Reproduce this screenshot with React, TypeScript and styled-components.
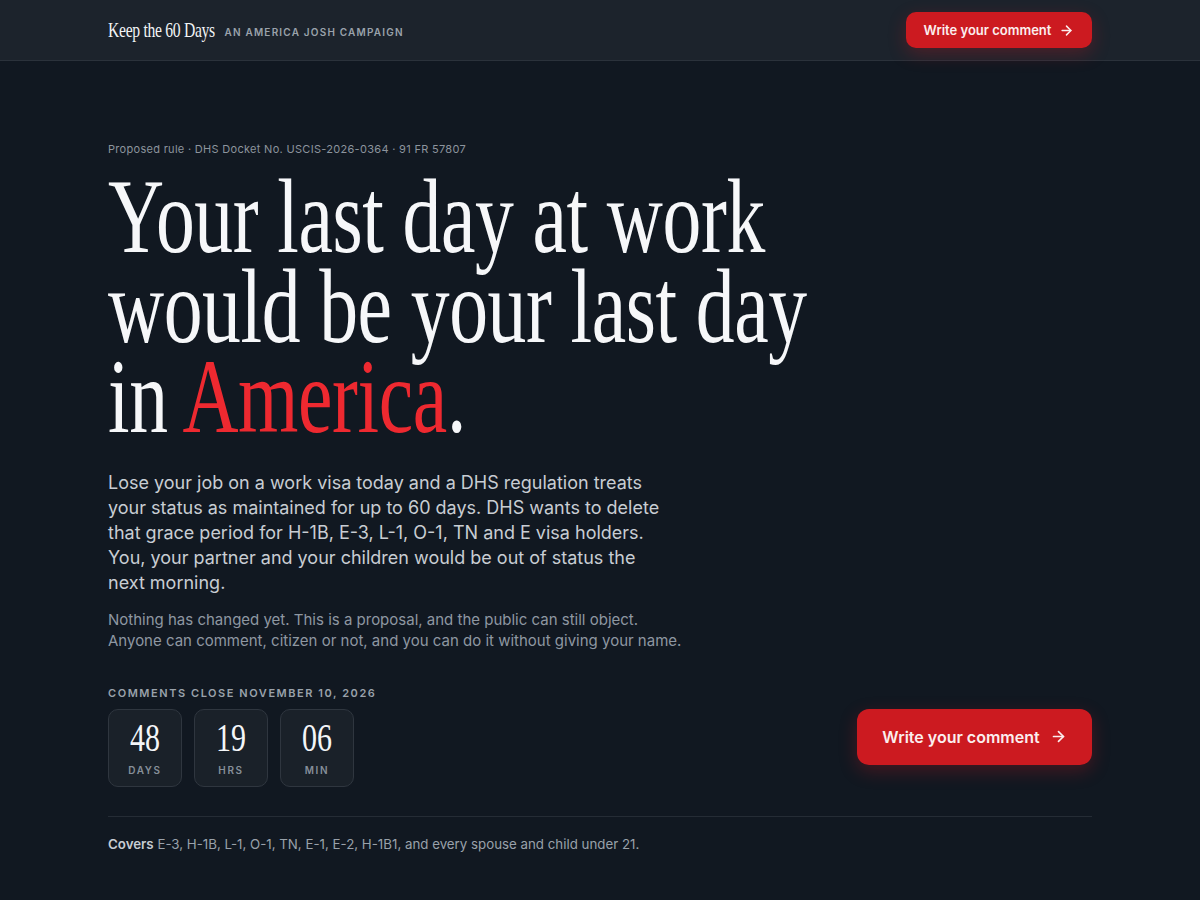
import React from "react";
import styled, { createGlobalStyle } from "styled-components";
import { ArrowRight } from "lucide-react";

const Global = createGlobalStyle`
  html, body { margin: 0; padding: 0; background: #111821; }
  body { font-family: Inter, "Noto Sans", sans-serif; color: #e9edf1; -webkit-font-smoothing: antialiased; }
  * { box-sizing: border-box; }
`;

const Page = styled.div`
  min-height: 900px;
  background: #111821;
`;

const Header = styled.header`
  height: 61px;
  background: #1c232c;
  border-bottom: 1px solid #2b323b;
`;

const Container = styled.div`
  width: 984px;
  margin: 0 auto;
`;

const HeaderInner = styled(Container)`
  height: 60px;
  display: flex;
  align-items: center;
  justify-content: space-between;
`;

const Brand = styled.div`
  display: flex;
  align-items: center;
`;

const Logo = styled.span`
  display: inline-block;
  font-family: "Liberation Serif", serif;
  font-size: 21px;
  letter-spacing: -0.4px;
  color: #f2f4f6;
  white-space: nowrap;
  transform: scaleX(0.745);
  transform-origin: left center;
  margin-right: -27px;
  line-height: 1;
`;

const Tagline = styled.span`
  font-size: 10px;
  font-weight: 600;
  letter-spacing: 1.2px;
  color: #9aa2ab;
  text-transform: uppercase;
  margin-top: 3px;
`;

const CTA = styled.a<{ $big?: boolean }>`
  display: inline-flex;
  align-items: center;
  justify-content: center;
  gap: ${(p) => (p.$big ? "10px" : "8px")};
  height: ${(p) => (p.$big ? "56px" : "36px")};
  width: ${(p) => (p.$big ? "235px" : "186px")};
  border-radius: ${(p) => (p.$big ? "12px" : "10px")};
  background: #cc1a20;
  color: #fbeeee;
  font-size: ${(p) => (p.$big ? "16px" : "13px")};
  font-weight: 600;
  text-decoration: none;
  box-shadow: 0 6px 18px rgba(204, 26, 32, 0.28);
  cursor: pointer;
`;

const Main = styled(Container)`
  padding-top: 80px;
`;

const Eyebrow = styled.p`
  margin: 0;
  font-size: 11px;
  line-height: 16px;
  letter-spacing: 0.3px;
  color: #8c949d;
`;

const Headline = styled.h1`
  margin: 15px 0 0;
  font-family: "Liberation Serif", serif;
  font-weight: 400;
  font-size: 106px;
  line-height: 90px;
  letter-spacing: -0.5px;
  color: #f6f7f9;
  white-space: nowrap;
  transform: scaleX(0.732);
  transform-origin: left top;
`;

const Red = styled.span`
  color: #ee2930;
`;

const Lead = styled.p`
  margin: 28px 0 0;
  max-width: 566px;
  font-size: 18px;
  line-height: 25px;
  color: #c8cdd3;
`;

const Note = styled.p`
  margin: 14px 0 0;
  max-width: 580px;
  font-size: 15px;
  line-height: 21px;
  color: #8e97a1;
`;

const ActionRow = styled.div`
  margin-top: 35px;
  display: flex;
  align-items: center;
  justify-content: space-between;
`;

const Deadline = styled.div`
  display: flex;
  flex-direction: column;
  gap: 9px;
`;

const DeadlineLabel = styled.div`
  font-size: 11px;
  line-height: 14px;
  font-weight: 600;
  letter-spacing: 1.55px;
  color: #9aa2ab;
  text-transform: uppercase;
`;

const Boxes = styled.div`
  display: flex;
  gap: 12px;
`;

const Box = styled.div`
  width: 74px;
  height: 78px;
  border-radius: 10px;
  background: #1a2129;
  border: 1px solid #2f363f;
  display: flex;
  flex-direction: column;
  align-items: center;
  padding-top: 8px;
`;

const Num = styled.div`
  font-family: "Liberation Serif", serif;
  font-size: 40px;
  line-height: 40px;
  color: #f4f6f8;
  transform: scaleX(0.75);
`;

const Unit = styled.div`
  margin-top: 6px;
  font-size: 10px;
  font-weight: 600;
  letter-spacing: 1.6px;
  color: #868f99;
  text-transform: uppercase;
`;

const Footer = styled.div`
  margin-top: 29px;
  border-top: 1px solid #252c35;
  padding-top: 18px;
  font-size: 13.3px;
  line-height: 18px;
  color: #99a1aa;
`;

const Strong = styled.strong`
  font-weight: 600;
  color: #c7ccd2;
`;

const counts = [
  { n: "48", u: "Days" },
  { n: "19", u: "Hrs" },
  { n: "06", u: "Min" },
];

export default function App() {
  return (
    <Page>
      <Global />
      <Header>
        <HeaderInner>
          <Brand>
            <Logo>Keep the 60 Days</Logo>
            <Tagline>An America Josh Campaign</Tagline>
          </Brand>
          <CTA>
            Write your comment <ArrowRight size={15} strokeWidth={2.4} />
          </CTA>
        </HeaderInner>
      </Header>
      <Main>
        <Eyebrow>Proposed rule · DHS Docket No. USCIS-2026-0364 · 91 FR 57807</Eyebrow>
        <Headline>
          Your last day at work
          <br />
          would be your last day
          <br />
          in <Red>America</Red>.
        </Headline>
        <Lead>
          Lose your job on a work visa today and a DHS regulation treats your status as maintained
          for up to 60 days. DHS wants to delete that grace period for H-1B, E-3, L-1, O-1, TN and
          E visa holders. You, your partner and your children would be out of status the next
          morning.
        </Lead>
        <Note>
          Nothing has changed yet. This is a proposal, and the public can still object. Anyone can
          comment, citizen or not, and you can do it without giving your name.
        </Note>
        <ActionRow>
          <Deadline>
            <DeadlineLabel>Comments close November 10, 2026</DeadlineLabel>
            <Boxes>
              {counts.map((c) => (
                <Box key={c.u}>
                  <Num>{c.n}</Num>
                  <Unit>{c.u}</Unit>
                </Box>
              ))}
            </Boxes>
          </Deadline>
          <CTA $big>
            Write your comment <ArrowRight size={17} strokeWidth={2.4} />
          </CTA>
        </ActionRow>
        <Footer>
          <Strong>Covers</Strong> E-3, H-1B, L-1, O-1, TN, E-1, E-2, H-1B1, and every spouse and
          child under 21.
        </Footer>
      </Main>
    </Page>
  );
}
